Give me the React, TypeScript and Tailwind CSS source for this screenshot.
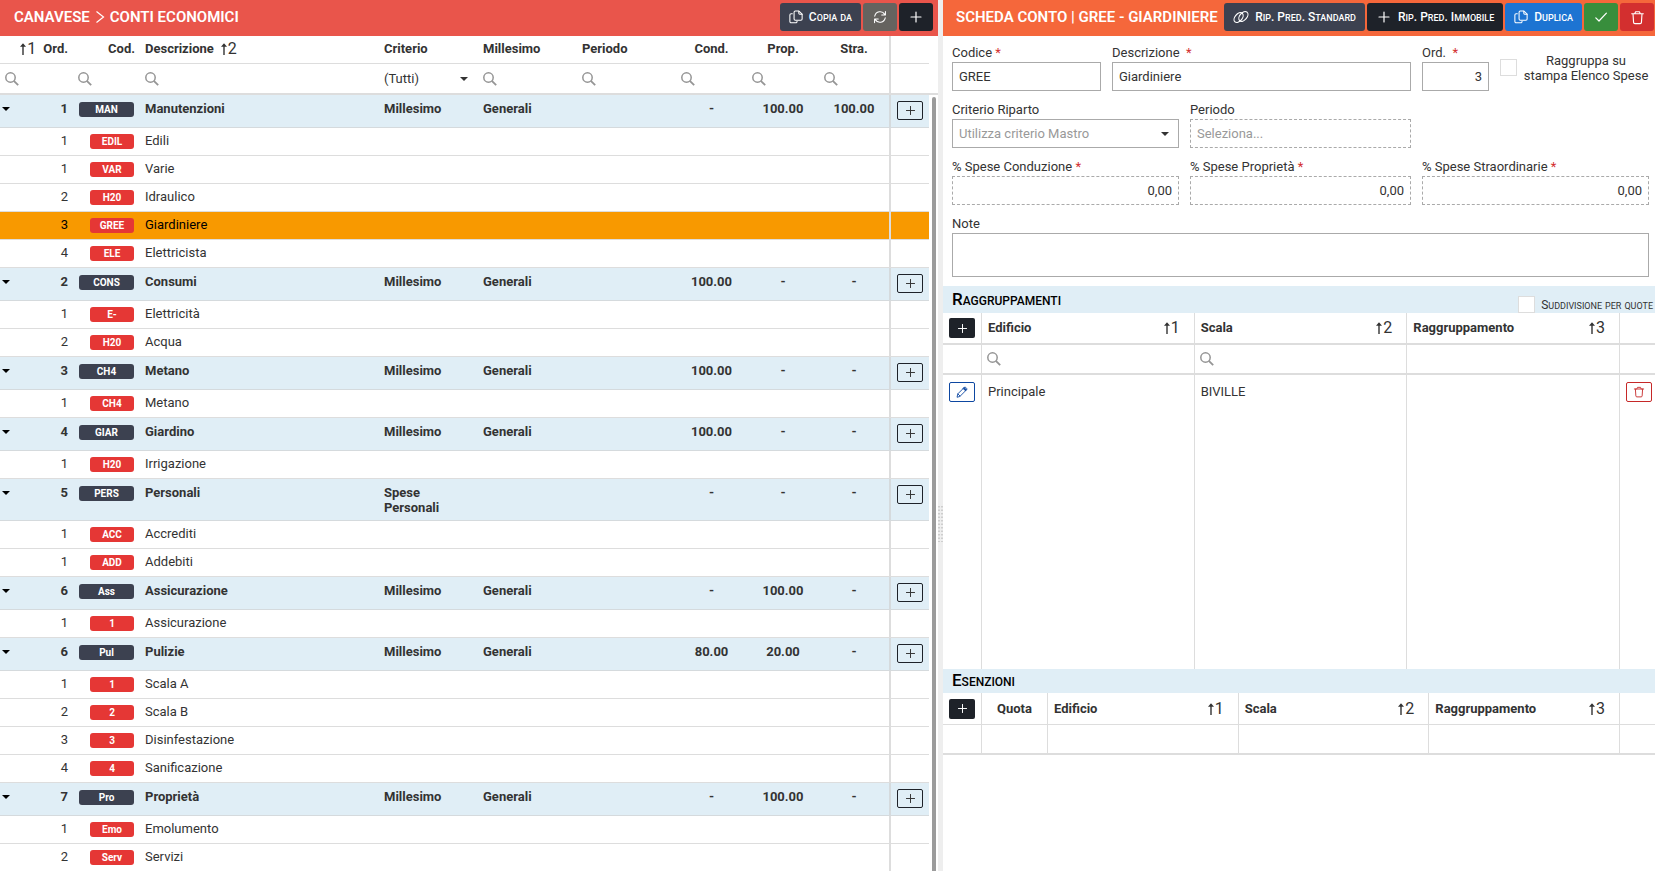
import React, { useState } from 'react';
import clsx from 'clsx';

interface Conto {
  ord: number;
  cod: string;
  descrizione: string;
}

interface Mastro extends Conto {
  criterio: string;
  millesimo: string;
  cond: string;
  prop: string;
  stra: string;
  conti: Conto[];
}

const MASTRI: Mastro[] = [
  {
    ord: 1, cod: 'MAN', descrizione: 'Manutenzioni', criterio: 'Millesimo', millesimo: 'Generali', cond: '-', prop: '100.00', stra: '100.00',
    conti: [
      { ord: 1, cod: 'EDIL', descrizione: 'Edili' },
      { ord: 1, cod: 'VAR', descrizione: 'Varie' },
      { ord: 2, cod: 'H20', descrizione: 'Idraulico' },
      { ord: 3, cod: 'GREE', descrizione: 'Giardiniere' },
      { ord: 4, cod: 'ELE', descrizione: 'Elettricista' },
    ],
  },
  {
    ord: 2, cod: 'CONS', descrizione: 'Consumi', criterio: 'Millesimo', millesimo: 'Generali', cond: '100.00', prop: '-', stra: '-',
    conti: [
      { ord: 1, cod: 'E-', descrizione: 'Elettricità' },
      { ord: 2, cod: 'H20', descrizione: 'Acqua' },
    ],
  },
  {
    ord: 3, cod: 'CH4', descrizione: 'Metano', criterio: 'Millesimo', millesimo: 'Generali', cond: '100.00', prop: '-', stra: '-',
    conti: [{ ord: 1, cod: 'CH4', descrizione: 'Metano' }],
  },
  {
    ord: 4, cod: 'GIAR', descrizione: 'Giardino', criterio: 'Millesimo', millesimo: 'Generali', cond: '100.00', prop: '-', stra: '-',
    conti: [{ ord: 1, cod: 'H20', descrizione: 'Irrigazione' }],
  },
  {
    ord: 5, cod: 'PERS', descrizione: 'Personali', criterio: 'Spese Personali', millesimo: '', cond: '-', prop: '-', stra: '-',
    conti: [
      { ord: 1, cod: 'ACC', descrizione: 'Accrediti' },
      { ord: 1, cod: 'ADD', descrizione: 'Addebiti' },
    ],
  },
  {
    ord: 6, cod: 'Ass', descrizione: 'Assicurazione', criterio: 'Millesimo', millesimo: 'Generali', cond: '-', prop: '100.00', stra: '-',
    conti: [{ ord: 1, cod: '1', descrizione: 'Assicurazione' }],
  },
  {
    ord: 6, cod: 'Pul', descrizione: 'Pulizie', criterio: 'Millesimo', millesimo: 'Generali', cond: '80.00', prop: '20.00', stra: '-',
    conti: [
      { ord: 1, cod: '1', descrizione: 'Scala A' },
      { ord: 2, cod: '2', descrizione: 'Scala B' },
      { ord: 3, cod: '3', descrizione: 'Disinfestazione' },
      { ord: 4, cod: '4', descrizione: 'Sanificazione' },
    ],
  },
  {
    ord: 7, cod: 'Pro', descrizione: 'Proprietà', criterio: 'Millesimo', millesimo: 'Generali', cond: '-', prop: '100.00', stra: '-',
    conti: [
      { ord: 1, cod: 'Emo', descrizione: 'Emolumento' },
      { ord: 2, cod: 'Serv', descrizione: 'Servizi' },
    ],
  },
];

function Svg({ className, children }: { className?: string; children: React.ReactNode }) {
  return (
    <svg viewBox="0 0 16 16" fill="none" stroke="currentColor" strokeWidth="1.2" strokeLinecap="round" strokeLinejoin="round" className={clsx('shrink-0', className)} aria-hidden="true">
      {children}
    </svg>
  );
}

const PlusIcon = ({ className = 'w-4 h-4' }: { className?: string }) => (
  <Svg className={className}><path d="M8 3v10M3 8h10" /></Svg>
);

const CopyIcon = () => (
  <Svg className="w-[14px] h-[14px]">
    <path d="M7.2 1.200h4.200L15 4.600v5.600a1.400 1.400 0 0 1-1.400 1.400H7.200a1.400 1.400 0 0 1-1.400-1.400V2.600a1.400 1.400 0 0 1 1.400-1.400z" />
    <path d="M11.200 1.400v2.400a1 1 0 0 0 1 1H15" />
    <path d="M3.800 4.200H2.400A1.400 1.400 0 0 0 1 5.600v7.600a1.400 1.400 0 0 0 1.400 1.400h5.400a1.400 1.400 0 0 0 1.400-1.400v-.4" />
  </Svg>
);

const RefreshIcon = () => (
  <Svg className="w-[14px] h-[14px]">
    <path d="M2 7A6.200 6.200 0 0 1 13.400 5M14.200 1.600v4.200H10" />
    <path d="M14 9A6.200 6.200 0 0 1 2.600 11M1.800 14.400v-4.200H6" />
  </Svg>
);

const LinkIcon = () => (
  <Svg className="w-4 h-4">
    <ellipse cx="5.600" cy="8.600" rx="5.600" ry="3.600" transform="rotate(-50 5.600 8.600)" />
    <ellipse cx="10.400" cy="7.400" rx="5.600" ry="3.600" transform="rotate(-50 10.400 7.400)" />
  </Svg>
);

const CheckIcon = () => (
  <Svg className="w-4 h-4"><path d="M2.800 8.800l3.200 3.200L13.400 4.200" /></Svg>
);

const TrashIcon = ({ className = 'w-[15px] h-[15px]' }: { className?: string }) => (
  <Svg className={className}>
    <path d="M1.800 4h12.400M5 4l1-2.200h4L11 4M3.200 4l.6 9.200a1.400 1.400 0 0 0 1.400 1.300h5.600a1.400 1.400 0 0 0 1.400-1.300l.6-9.200" />
  </Svg>
);

const PencilIcon = () => (
  <Svg className="w-3 h-3">
    <path d="M1.500 14.500l.9-4L11 1.900a1.400 1.400 0 0 1 2 0l1.100 1.100a1.400 1.400 0 0 1 0 2L5.500 13.600z" />
    <path d="M2.600 10.600l2.800 2.800" />
    <path d="M11 2.200l2.900 2.900-1.300 1.300-2.900-2.900z" fill="currentColor" />
  </Svg>
);

const SearchIcon = () => (
  <svg viewBox="0 0 14 14" fill="none" stroke="#959595" strokeWidth="1.500" className="w-[14px] h-[14px] shrink-0" aria-hidden="true">
    <circle cx="5.500" cy="5.500" r="4.700" />
    <path d="M8.800 8.800L13.200 13.200" strokeWidth="1.800" />
  </svg>
);

const Caret = ({ className }: { className?: string }) => (
  <svg viewBox="0 0 8 4" className={clsx('w-2 h-1 fill-current', className)} aria-hidden="true">
    <path d="M0 0h8L4 4z" />
  </svg>
);

function Sort({ n }: { n: number }) {
  return (
    <span className="inline-flex items-center text-base leading-4 font-normal text-[#333]">
      <svg viewBox="0 0 8 12" fill="none" stroke="currentColor" strokeWidth="1.400" className="w-2 h-3" aria-hidden="true">
        <path d="M4 12V1.500" />
        <path d="M1 3.800L4 .2l3 3.600z" fill="currentColor" stroke="none" />
      </svg>
      {n}
    </span>
  );
}

// Full-size capitals, lower case letters drawn as capitals about 70% as tall
function SmallCaps({ text, large }: { text: string; large?: boolean }) {
  return (
    <span className={clsx('whitespace-pre', large ? 'text-[17px]' : 'text-xs')}>
      {text.split(/([a-z]+)/).map((part, i) =>
        i % 2 ? (
          <span key={i} className={clsx('uppercase', large ? 'text-xs' : 'text-[9px]')}>{part}</span>
        ) : (
          part
        )
      )}
    </span>
  );
}

function ToolButton({ className, label, icon, text }: { className: string; label?: string; icon: React.ReactNode; text?: string }) {
  return (
    <button
      type="button"
      aria-label={label}
      className={clsx('h-7 shrink-0 rounded-[3px] flex items-center justify-center gap-[6px] text-white font-medium', text ? 'px-[9px]' : 'w-[34px]', className)}
    >
      {icon}
      {text && <SmallCaps text={text} />}
    </button>
  );
}

function FilterInput({ label }: { label: string }) {
  return (
    <label className="flex items-center gap-1 px-[5px]">
      <SearchIcon />
      <input type="text" aria-label={label} className="w-full min-w-0 outline-none bg-transparent" />
    </label>
  );
}

function ContiTable() {
  const [selected, setSelected] = useState('GREE');

  return (
    <table className="w-full table-fixed border-separate border-spacing-0">
      <colgroup>
        <col className="w-[73px]" />
        <col className="w-[67px]" />
        <col />
        <col className="w-[99px]" />
        <col className="w-[99px]" />
        <col className="w-[99px]" />
        <col className="w-[71px]" />
        <col className="w-[72px]" />
        <col className="w-[70px]" />
        <col className="w-[40px]" />
      </colgroup>
      <thead>
        <tr className="text-left font-bold [&>th]:h-7 [&>th]:border-b [&>th]:border-[#ddd] [&>th]:px-[5px] [&>th]:pb-[2px] [&>th]:align-middle">
          <th>
            <div className="flex items-center justify-end gap-[7px]"><Sort n={1} />Ord.</div>
          </th>
          <th className="text-right">Cod.</th>
          <th>
            <div className="flex items-center gap-[6px]">Descrizione <Sort n={2} /></div>
          </th>
          <th>Criterio</th>
          <th>Millesimo</th>
          <th>Periodo</th>
          <th className="text-center">Cond.</th>
          <th className="text-center">Prop.</th>
          <th className="text-center">Stra.</th>
          <th className="border-l-2" />
        </tr>
        <tr className="[&>td]:h-[31px] [&>td]:border-b-2 [&>td]:border-[#ddd]">
          <td><FilterInput label="Filtra Ord." /></td>
          <td><FilterInput label="Filtra Cod." /></td>
          <td><FilterInput label="Filtra Descrizione" /></td>
          <td>
            <div className="relative flex items-center px-[5px]">
              <select aria-label="Filtra Criterio" className="w-full appearance-none bg-transparent outline-none">
                <option>(Tutti)</option>
                <option>Millesimo</option>
                <option>Spese Personali</option>
              </select>
              <Caret className="absolute right-[10px] pointer-events-none" />
            </div>
          </td>
          <td><FilterInput label="Filtra Millesimo" /></td>
          <td><FilterInput label="Filtra Periodo" /></td>
          <td><FilterInput label="Filtra Cond." /></td>
          <td><FilterInput label="Filtra Prop." /></td>
          <td><FilterInput label="Filtra Stra." /></td>
          <td className="border-l-2" />
        </tr>
      </thead>
      <tbody className="leading-[15px]">
        {MASTRI.map((m) => (
          <React.Fragment key={m.cod}>
            <tr className="bg-[#e0eef6] font-bold [&>td]:h-[33px] [&>td]:border-b [&>td]:border-[#d5dadd] [&>td]:px-[5px] [&>td]:pt-[6px] [&>td]:pb-[5px] [&>td]:align-top">
              <td>
                <div className="flex items-center justify-between">
                  <button type="button" aria-label={`Comprimi ${m.descrizione}`} className="-ml-[3px] text-black"><Caret /></button>
                  {m.ord}
                </div>
              </td>
              <td>
                <span className="block mt-px mx-px h-[15px] rounded-[3px] bg-[#3c4150] text-white text-[10px] text-center">{m.cod}</span>
              </td>
              <td>{m.descrizione}</td>
              <td>{m.criterio}</td>
              <td>{m.millesimo}</td>
              <td />
              <td className="text-center">{m.cond}</td>
              <td className="text-center">{m.prop}</td>
              <td className="text-center">{m.stra}</td>
              <td className="border-l-2">
                <button type="button" aria-label={`Aggiungi conto a ${m.descrizione}`} className="w-[26px] h-[19px] mx-px border border-[#1e2229] rounded-[2px] flex items-center justify-center">
                  <PlusIcon className="w-[13px] h-[13px]" />
                </button>
              </td>
            </tr>
            {m.conti.map((c) => (
              <tr
                key={c.cod + c.ord}
                onClick={() => setSelected(c.cod)}
                className={clsx(
                  '[&>td]:h-7 [&>td]:border-b [&>td]:border-[#ddd] [&>td]:px-[5px] [&>td]:pt-[5px] [&>td]:align-top',
                  c.cod === selected && 'bg-[#f89900] text-black'
                )}
              >
                <td className="text-right">{c.ord}</td>
                <td>
                  <span className="block mt-px mr-px ml-3 h-[15px] rounded-[3px] bg-[#e53735] text-white text-[10px] font-bold text-center">{c.cod}</span>
                </td>
                <td>{c.descrizione}</td>
                <td />
                <td />
                <td />
                <td />
                <td />
                <td />
                <td className="border-l-2" />
              </tr>
            ))}
          </React.Fragment>
        ))}
      </tbody>
    </table>
  );
}

interface FieldProps {
  id: string;
  label: string;
  required?: boolean;
  dashed?: boolean;
  right?: boolean;
  value?: string;
  placeholder?: string;
}

function FieldLabel({ id, label, required }: { id: string; label: string; required?: boolean }) {
  return (
    <label htmlFor={id} className="block h-[18px] leading-[18px] whitespace-nowrap">
      {label} {required && <span className="text-[#d32f2f]">*</span>}
    </label>
  );
}

function Field({ id, label, required, dashed, right, value, placeholder }: FieldProps) {
  return (
    <div className="min-w-0">
      <FieldLabel id={id} label={label} required={required} />
      <input
        id={id}
        type="text"
        defaultValue={value}
        placeholder={placeholder}
        className={clsx('block w-full h-[29px] px-[6px] border border-[#aaa] placeholder:text-[#999] outline-none', dashed && 'border-dashed', right && 'text-right')}
      />
    </div>
  );
}

function ColHead({ title, n }: { title: string; n: number }) {
  return (
    <div className="flex items-center justify-between pl-[6px] pr-[14px]">
      {title}
      <Sort n={n} />
    </div>
  );
}

function AddButton({ label }: { label: string }) {
  return (
    <button type="button" aria-label={label} className="w-[26px] h-5 mx-auto rounded-[2px] bg-[#1e2229] text-white flex items-center justify-center">
      <PlusIcon className="w-[13px] h-[13px]" />
    </button>
  );
}

function SchedaConto() {
  return (
    <form className="flex flex-col gap-[10px] pl-[9px] pt-2 pr-[6px] pb-[9px]">
      <div className="grid grid-cols-[149fr_299fr_67fr_149fr] gap-[11px]">
        <Field id="codice" label="Codice" required value="GREE" />
        <Field id="descrizione" label={'Descrizione\u00a0'} required value="Giardiniere" />
        <Field id="ord" label={'Ord.\u00a0'} required right value="3" />
        <label className="flex items-center whitespace-nowrap">
          <input type="checkbox" className="appearance-none w-[17px] h-[17px] shrink-0 border border-[#ddd] bg-white" />
          <span className="flex-1 pl-[6px] text-center leading-[15px]">Raggruppa su<br />stampa Elenco Spese</span>
        </label>
      </div>
      <div className="grid grid-cols-[227fr_221fr_227fr] gap-[11px]">
        <div>
          <FieldLabel id="criterio" label="Criterio Riparto" />
          <div className="relative flex items-center">
            <select id="criterio" className="w-full h-[29px] px-[6px] border border-[#aaa] appearance-none text-[#999] bg-white outline-none">
              <option>Utilizza criterio Mastro</option>
            </select>
            <Caret className="absolute right-[10px] pointer-events-none" />
          </div>
        </div>
        <Field id="periodo" label="Periodo" dashed placeholder="Seleziona..." />
      </div>
      <div className="grid grid-cols-[227fr_221fr_227fr] gap-[11px]">
        <Field id="conduzione" label="% Spese Conduzione" required dashed right value="0,00" />
        <Field id="proprieta" label="% Spese Proprietà" required dashed right value="0,00" />
        <Field id="straordinarie" label="% Spese Straordinarie" required dashed right value="0,00" />
      </div>
      <div>
        <FieldLabel id="note" label="Note" />
        <textarea id="note" className="block w-full h-11 p-[6px] border border-[#aaa] resize-none outline-none" />
      </div>
    </form>
  );
}

export default function App() {
  return (
    <div className="h-screen flex overflow-hidden bg-white text-[#333] text-[13px] leading-[18px] font-[Roboto,sans-serif]">
      <section className="flex-[938] min-w-0 flex flex-col">
        <header className="h-9 shrink-0 flex items-center gap-[2px] bg-[#e9554b] pl-[14px] pr-[5px] pb-[2px]">
          <h1 className="mr-auto flex items-center gap-[5px] text-white text-[15px] font-semibold">
            CANAVESE
            <svg viewBox="0 0 10 14" fill="none" stroke="currentColor" strokeWidth="1.200" className="w-[10px] h-[14px]" aria-hidden="true">
              <path d="M1.500 1.500L8.500 7l-7 5.500" />
            </svg>
            CONTI ECONOMICI
          </h1>
          <ToolButton className="bg-[#3c4150]" icon={<CopyIcon />} text="Copia da" />
          <ToolButton className="bg-[#65635f]" label="Aggiorna" icon={<RefreshIcon />} />
          <ToolButton className="bg-[#1e2229]" label="Aggiungi" icon={<PlusIcon />} />
        </header>
        <div className="flex-1 min-h-0 flex overflow-hidden">
          <div className="flex-1 min-w-0">
            <ContiTable />
          </div>
          <div className="w-[9px] shrink-0 flex flex-col items-end">
            <div className="h-[59px] w-full border-b-2 border-[#ddd]" />
            <div className="flex-1 w-1 mt-[2px] mr-[2px] rounded-t-full bg-[#9b9b9b]" />
          </div>
        </div>
      </section>

      <div className="w-[5px] shrink-0 bg-[#eee] flex items-center justify-center">
        <svg viewBox="0 0 5 36" className="w-[5px] h-9 mt-[176px]" stroke="#c4c4c4" strokeWidth="1.500" strokeDasharray="1.500 2" aria-hidden="true">
          <path d="M1 0v36M4 0v36" />
        </svg>
      </div>

      <section className="flex-[712] min-w-0 flex flex-col">
        <header className="h-9 shrink-0 flex items-center gap-[2px] bg-[#f5673b] pl-[13px] pr-px pb-[2px]">
          <h2 className="mr-auto text-white text-[15px] font-semibold whitespace-nowrap">SCHEDA CONTO | GREE - GIARDINIERE</h2>
          <ToolButton className="bg-[#3c4150]" icon={<LinkIcon />} text="Rip. Pred. Standard" />
          <ToolButton className="bg-[#1e2229]" icon={<PlusIcon />} text="Rip. Pred. Immobile" />
          <ToolButton className="bg-[#1d74d2]" icon={<CopyIcon />} text="Duplica" />
          <ToolButton className="bg-[#388e3c]" label="Salva" icon={<CheckIcon />} />
          <ToolButton className="bg-[#d32f2f]" label="Elimina" icon={<TrashIcon />} />
        </header>

        <SchedaConto />

        <div className="h-[27px] shrink-0 flex items-center justify-between bg-[#e0eef6] pl-[9px] pr-[2px]">
          <h3 className="leading-6 font-medium text-black"><SmallCaps text="Raggruppamenti" large /></h3>
          <label className="self-end flex items-end gap-[6px] leading-4">
            <input type="checkbox" className="appearance-none w-[17px] h-[17px] border border-[#ddd] bg-white" />
            <SmallCaps text="Suddivisione per quote" />
          </label>
        </div>
        <div className="h-[356px] shrink-0">
          <table className="w-full h-full table-fixed border-separate border-spacing-0 [&_td:not(:last-child)]:border-r [&_th:not(:last-child)]:border-r [&_td]:border-[#ddd] [&_th]:border-[#ddd]">
            <colgroup>
              <col className="w-[39px]" />
              <col />
              <col />
              <col />
              <col className="w-[35px]" />
            </colgroup>
            <thead>
              <tr className="text-left [&>th]:h-8 [&>th]:border-b-2">
                <th><AddButton label="Aggiungi raggruppamento" /></th>
                <th><ColHead title="Edificio" n={1} /></th>
                <th><ColHead title="Scala" n={2} /></th>
                <th><ColHead title="Raggruppamento" n={3} /></th>
                <th />
              </tr>
              <tr className="[&>td]:h-[30px] [&>td]:border-b-2">
                <td />
                <td><FilterInput label="Filtra Edificio" /></td>
                <td><FilterInput label="Filtra Scala" /></td>
                <td />
                <td />
              </tr>
            </thead>
            <tbody>
              <tr className="leading-5 [&>td]:align-top [&>td]:pt-[7px]">
                <td>
                  <button type="button" aria-label="Modifica" className="w-[26px] h-5 mx-auto border border-[#0d47a1] rounded-[2px] text-[#0d47a1] flex items-center justify-center">
                    <PencilIcon />
                  </button>
                </td>
                <td><div className="pl-[6px]">Principale</div></td>
                <td><div className="pl-[6px]">BIVILLE</div></td>
                <td />
                <td>
                  <button type="button" aria-label="Elimina raggruppamento" className="w-[26px] h-5 ml-[6px] border border-[#c62828] rounded-[2px] text-[#c62828] flex items-center justify-center">
                    <TrashIcon className="w-3 h-3" />
                  </button>
                </td>
              </tr>
            </tbody>
          </table>
        </div>

        <div className="h-6 shrink-0 flex items-center bg-[#e0eef6] pl-[9px]">
          <h3 className="leading-6 font-medium text-black"><SmallCaps text="Esenzioni" large /></h3>
        </div>
        <table className="w-full table-fixed border-separate border-spacing-0 [&_td:not(:last-child)]:border-r [&_th:not(:last-child)]:border-r [&_td]:border-[#ddd] [&_th]:border-[#ddd]">
          <colgroup>
            <col className="w-[39px]" />
            <col className="w-[66px]" />
            <col />
            <col />
            <col />
            <col className="w-[35px]" />
          </colgroup>
          <thead>
            <tr className="text-left [&>th]:h-8 [&>th]:border-b">
              <th><AddButton label="Aggiungi esenzione" /></th>
              <th className="text-center">Quota</th>
              <th><ColHead title="Edificio" n={1} /></th>
              <th><ColHead title="Scala" n={2} /></th>
              <th><ColHead title="Raggruppamento" n={3} /></th>
              <th />
            </tr>
          </thead>
          <tbody>
            <tr className="[&>td]:h-[30px] [&>td]:border-b-2">
              <td />
              <td />
              <td />
              <td />
              <td />
              <td />
            </tr>
          </tbody>
        </table>
      </section>
    </div>
  );
}
